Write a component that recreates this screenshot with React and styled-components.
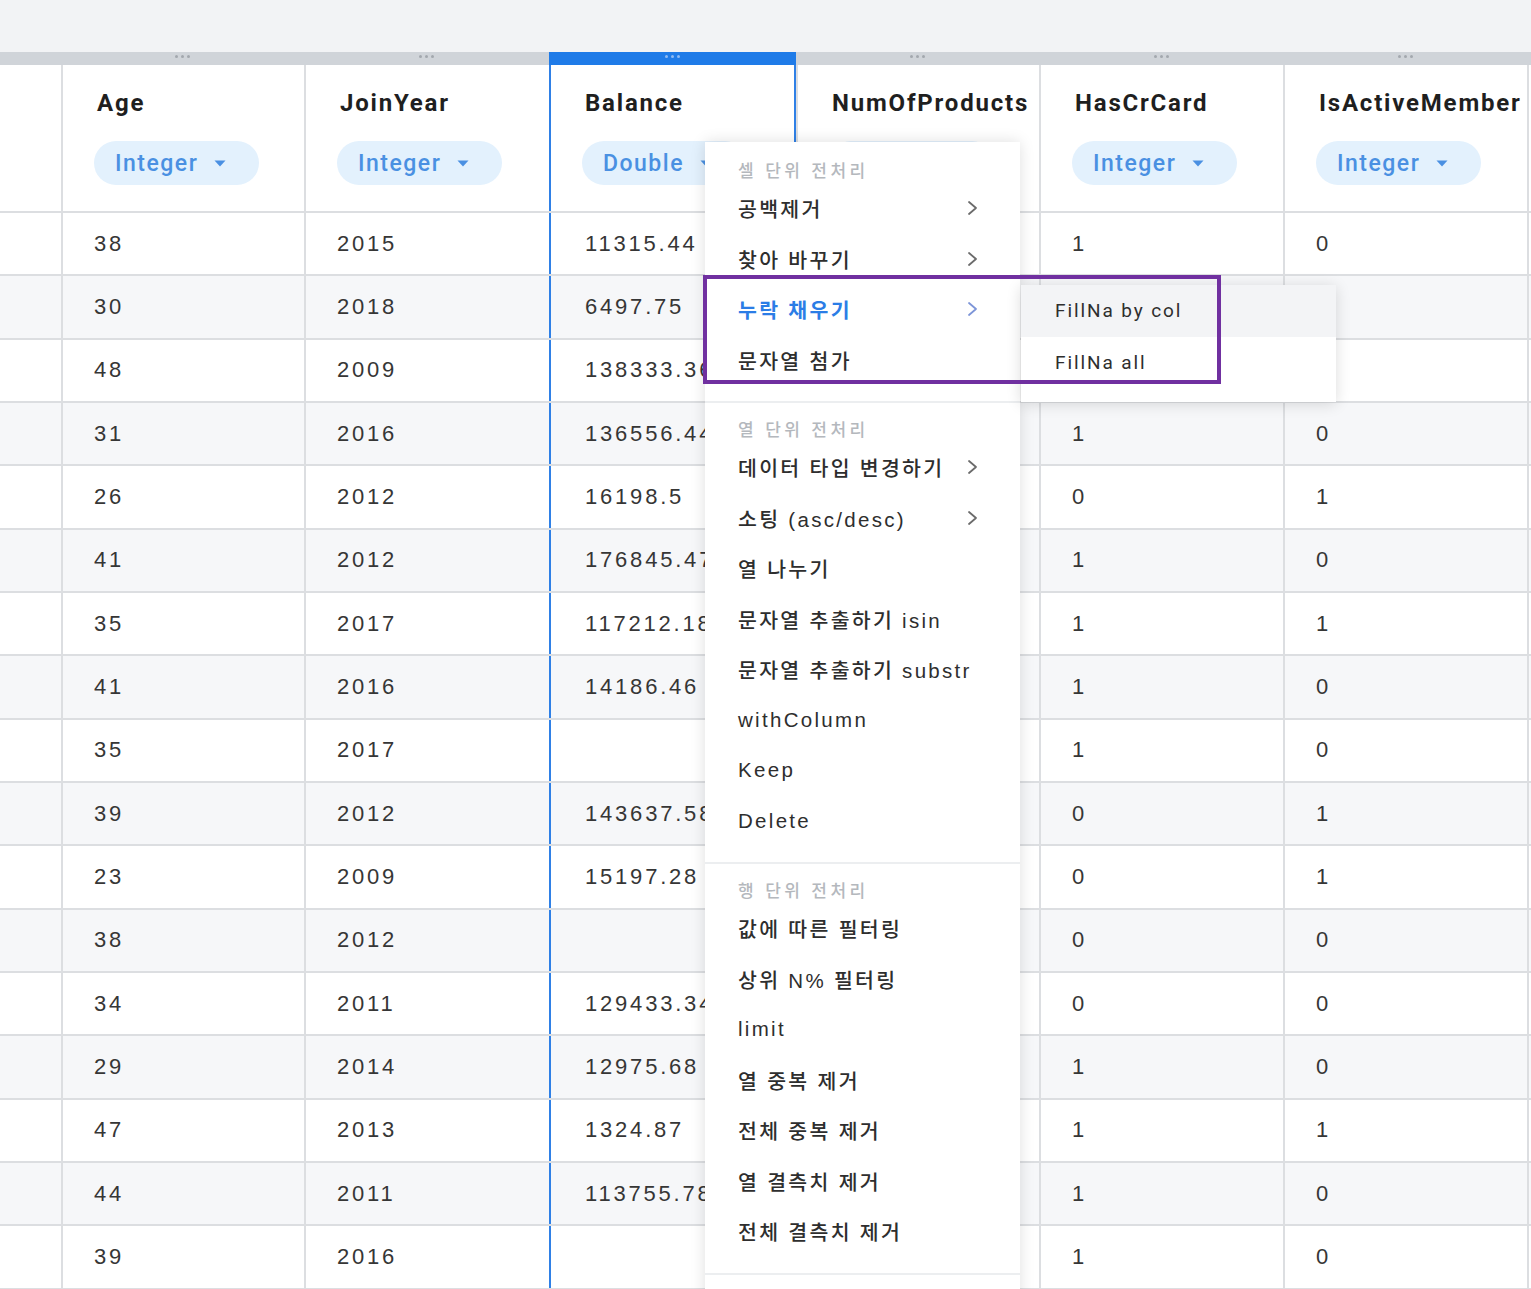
import React from "react";
import styled, { createGlobalStyle } from "styled-components";

const GlobalStyle = createGlobalStyle`
  html, body {
    margin: 0;
    padding: 0;
    background: #f2f3f5;
    overflow: hidden;
  }
  * {
    box-sizing: border-box;
  }
`;

const columns = [
  { key: "idx", title: "", width: 61 },
  { key: "age", title: "Age", type: "Integer", width: 243 },
  { key: "year", title: "JoinYear", type: "Integer", width: 245 },
  { key: "balance", title: "Balance", type: "Double", width: 247, selected: true },
  { key: "products", title: "NumOfProducts", type: "Integer", width: 243 },
  { key: "card", title: "HasCrCard", type: "Integer", width: 244 },
  { key: "active", title: "IsActiveMember", type: "Integer", width: 244 },
  { key: "rest", title: "", width: 260 },
];

// NumOfProducts values sit under the context menu, so they are left blank
const rows = [
  ["38", "2015", "11315.44", "", "1", "0"],
  ["30", "2018", "6497.75", "", "", ""],
  ["48", "2009", "138333.36", "", "", ""],
  ["31", "2016", "136556.44", "", "1", "0"],
  ["26", "2012", "16198.5", "", "0", "1"],
  ["41", "2012", "176845.47", "", "1", "0"],
  ["35", "2017", "117212.18", "", "1", "1"],
  ["41", "2016", "14186.46", "", "1", "0"],
  ["35", "2017", "", "", "1", "0"],
  ["39", "2012", "143637.58", "", "0", "1"],
  ["23", "2009", "15197.28", "", "0", "1"],
  ["38", "2012", "", "", "0", "0"],
  ["34", "2011", "129433.34", "", "0", "0"],
  ["29", "2014", "12975.68", "", "1", "0"],
  ["47", "2013", "1324.87", "", "1", "1"],
  ["44", "2011", "113755.78", "", "1", "0"],
  ["39", "2016", "", "", "1", "0"],
];

const menuSections = [
  {
    title: "셀 단위 전처리",
    items: [
      { label: "공백제거", sub: true },
      { label: "찾아 바꾸기", sub: true },
      { label: "누락 채우기", sub: true, active: true },
      { label: "문자열 첨가" },
    ],
  },
  {
    title: "열 단위 전처리",
    items: [
      { label: "데이터 타입 변경하기", sub: true },
      { label: "소팅 (asc/desc)", sub: true },
      { label: "열 나누기" },
      { label: "문자열 추출하기 isin" },
      { label: "문자열 추출하기 substr" },
      { label: "withColumn" },
      { label: "Keep" },
      { label: "Delete" },
    ],
  },
  {
    title: "행 단위 전처리",
    items: [
      { label: "값에 따른 필터링" },
      { label: "상위 N% 필터링" },
      { label: "limit" },
      { label: "열 중복 제거" },
      { label: "전체 중복 제거" },
      { label: "열 결측치 제거" },
      { label: "전체 결측치 제거" },
    ],
  },
];

const subItems = ["FillNa by col", "FillNa all"];

function Chevron({ color }) {
  return (
    <svg width="11" height="16" viewBox="0 0 11 16">
      <polyline
        points="2,2 9,8 2,14"
        fill="none"
        stroke={color}
        strokeWidth="1.8"
        strokeLinecap="round"
        strokeLinejoin="round"
      />
    </svg>
  );
}

function Caret() {
  return (
    <svg width="12" height="7" viewBox="0 0 12 7">
      <polygon points="0.5,0.5 11.5,0.5 6,6.5" fill="#4a90e2" />
    </svg>
  );
}

function App() {
  return (
    <Page>
      <GlobalStyle />
      <TopArea />
      <ResizeBar>
        {columns.map((col) => (
          <Handle key={col.key} $w={col.width} $selected={col.selected}>
            {col.title && (
              <Dots>
                <i />
                <i />
                <i />
              </Dots>
            )}
          </Handle>
        ))}
      </ResizeBar>

      <Grid>
        <HeaderRow>
          {columns.map((col, i) => (
            <HeaderCell key={col.key} $w={col.width} $first={i === 0} $selected={col.selected}>
              {col.title && (
                <>
                  <Title>{col.title}</Title>
                  <TypePill>
                    {col.type}
                    <Caret />
                  </TypePill>
                </>
              )}
            </HeaderCell>
          ))}
        </HeaderRow>

        {rows.map((row, r) => (
          <Row key={r} $alt={r % 2 === 1}>
            {columns.map((col, i) => (
              <Cell key={col.key} $w={col.width} $first={i === 0} $selected={col.selected}>
                {i > 0 && i <= row.length ? row[i - 1] : ""}
              </Cell>
            ))}
          </Row>
        ))}
      </Grid>

      <Menu>
        {menuSections.map((section) => (
          <Section key={section.title}>
            <SectionTitle>{section.title}</SectionTitle>
            {section.items.map((item) => (
              <MenuItem key={item.label} $active={item.active}>
                <span>{item.label}</span>
                {item.sub && <Chevron color={item.active ? "#7d95d8" : "#6b6b6b"} />}
                {item.active && (
                  <SubMenu>
                    {subItems.map((s, i) => (
                      <SubItem key={s} $hover={i === 0}>
                        {s}
                      </SubItem>
                    ))}
                  </SubMenu>
                )}
              </MenuItem>
            ))}
          </Section>
        ))}
        <MenuTail />
      </Menu>

      <Highlight />
    </Page>
  );
}

export default App;

const Page = styled.div`
  position: relative;
  width: 1531px;
  height: 1289px;
  overflow: hidden;
  background: #f2f3f5;
`;

const TopArea = styled.div`
  height: 52px;
  background: #f2f3f5;
`;

const ResizeBar = styled.div`
  display: flex;
  height: 13px;
  background: #d0d4d9;
`;

const Handle = styled.div`
  flex: 0 0 ${(p) => p.$w}px;
  display: flex;
  justify-content: center;
  padding-top: 3px;
  background: ${(p) => (p.$selected ? "#1f7be8" : "transparent")};
  i {
    background: ${(p) => (p.$selected ? "#8fbaf2" : "#a3a8ae")};
  }
`;

const Dots = styled.div`
  display: flex;
  gap: 3px;
  i {
    display: block;
    width: 3px;
    height: 3px;
    border-radius: 50%;
  }
`;

const Grid = styled.div`
  background: #fff;
`;

const HeaderRow = styled.div`
  display: flex;
  height: 148px;
  background: #fff;
  border-bottom: 2px solid #dcdee1;
`;

const HeaderCell = styled.div`
  flex: 0 0 ${(p) => p.$w}px;
  display: flex;
  flex-direction: column;
  align-items: flex-start;
  padding: 23px 0 0 31px;
  border-left: ${(p) => (p.$first ? "none" : `2px solid ${p.$selected ? "#2f80e6" : "#dcdee1"}`)};
  box-shadow: ${(p) => (p.$selected ? "inset -2px 0 0 #2f80e6" : "none")};
`;

const Title = styled.div`
  margin-left: 3px;
  height: 30px;
  line-height: 30px;
  font-family: Roboto, "Liberation Sans", sans-serif;
  font-weight: 700;
  font-size: 24px;
  letter-spacing: 1.8px;
  color: #1f1f1f;
  white-space: nowrap;
`;

const TypePill = styled.div`
  margin-top: 23px;
  display: flex;
  align-items: center;
  gap: 16px;
  height: 44px;
  width: 165px;
  padding-left: 21px;
  border-radius: 22px;
  background: #e3f1fd;
  font-family: Roboto, "Liberation Sans", sans-serif;
  font-weight: 500;
  font-size: 23px;
  letter-spacing: 1.5px;
  color: #4a90e2;
`;

const Row = styled.div`
  display: flex;
  height: 63.33px;
  background: ${(p) => (p.$alt ? "#f6f7f9" : "#fff")};
  border-bottom: 2px solid #dcdee1;
`;

const Cell = styled.div`
  flex: 0 0 ${(p) => p.$w}px;
  display: flex;
  align-items: center;
  padding-left: ${(p) => (p.$selected ? 34 : 31)}px;
  border-left: ${(p) => (p.$first ? "none" : `2px solid ${p.$selected ? "#2f80e6" : "#dcdee1"}`)};
  font-family: "Liberation Sans", Arial, sans-serif;
  font-size: 22px;
  letter-spacing: 2.8px;
  color: #363636;
  white-space: nowrap;
  overflow: hidden;
`;

const Menu = styled.div`
  position: absolute;
  left: 705px;
  top: 142px;
  width: 315px;
  padding-top: 2px;
  background: #fff;
  box-shadow: 0 0 14px rgba(0, 0, 0, 0.13);
`;

const Section = styled.div`
  padding: 17px 0 16px;
  border-bottom: 2px solid #eceef0;
`;

const SectionTitle = styled.div`
  height: 22px;
  line-height: 22px;
  padding-left: 33px;
  font-family: "Liberation Sans", "Noto Sans CJK KR", sans-serif;
  font-size: 17px;
  font-weight: 500;
  letter-spacing: 3.4px;
  color: #b4b8bd;
`;

const MenuItem = styled.div`
  position: relative;
  display: flex;
  align-items: center;
  justify-content: space-between;
  height: 50.5px;
  padding: 0 42px 0 33px;
  font-family: "Liberation Sans", "Noto Sans CJK KR", sans-serif;
  font-size: 20.5px;
  font-weight: ${(p) => (p.$active ? 700 : 500)};
  letter-spacing: 2.3px;
  color: ${(p) => (p.$active ? "#2b7de6" : "#2e2e2e")};
  white-space: nowrap;
`;

const SubMenu = styled.div`
  position: absolute;
  left: calc(100% + 1px);
  top: 1px;
  width: 315px;
  padding-bottom: 14px;
  background: #fff;
  box-shadow: 0 2px 14px rgba(0, 0, 0, 0.14);
`;

const SubItem = styled.div`
  display: flex;
  align-items: center;
  height: 51.5px;
  padding-left: 34px;
  background: ${(p) => (p.$hover ? "#f3f4f6" : "#fff")};
  font-family: Roboto, "Liberation Sans", sans-serif;
  font-weight: 400;
  font-size: 19px;
  letter-spacing: 1.9px;
  color: #2e2e2e;
`;

const MenuTail = styled.div`
  height: 60px;
`;

const Highlight = styled.div`
  position: absolute;
  left: 703px;
  top: 275px;
  width: 518px;
  height: 109px;
  border: 4px solid #7030a0;
  pointer-events: none;
`;
